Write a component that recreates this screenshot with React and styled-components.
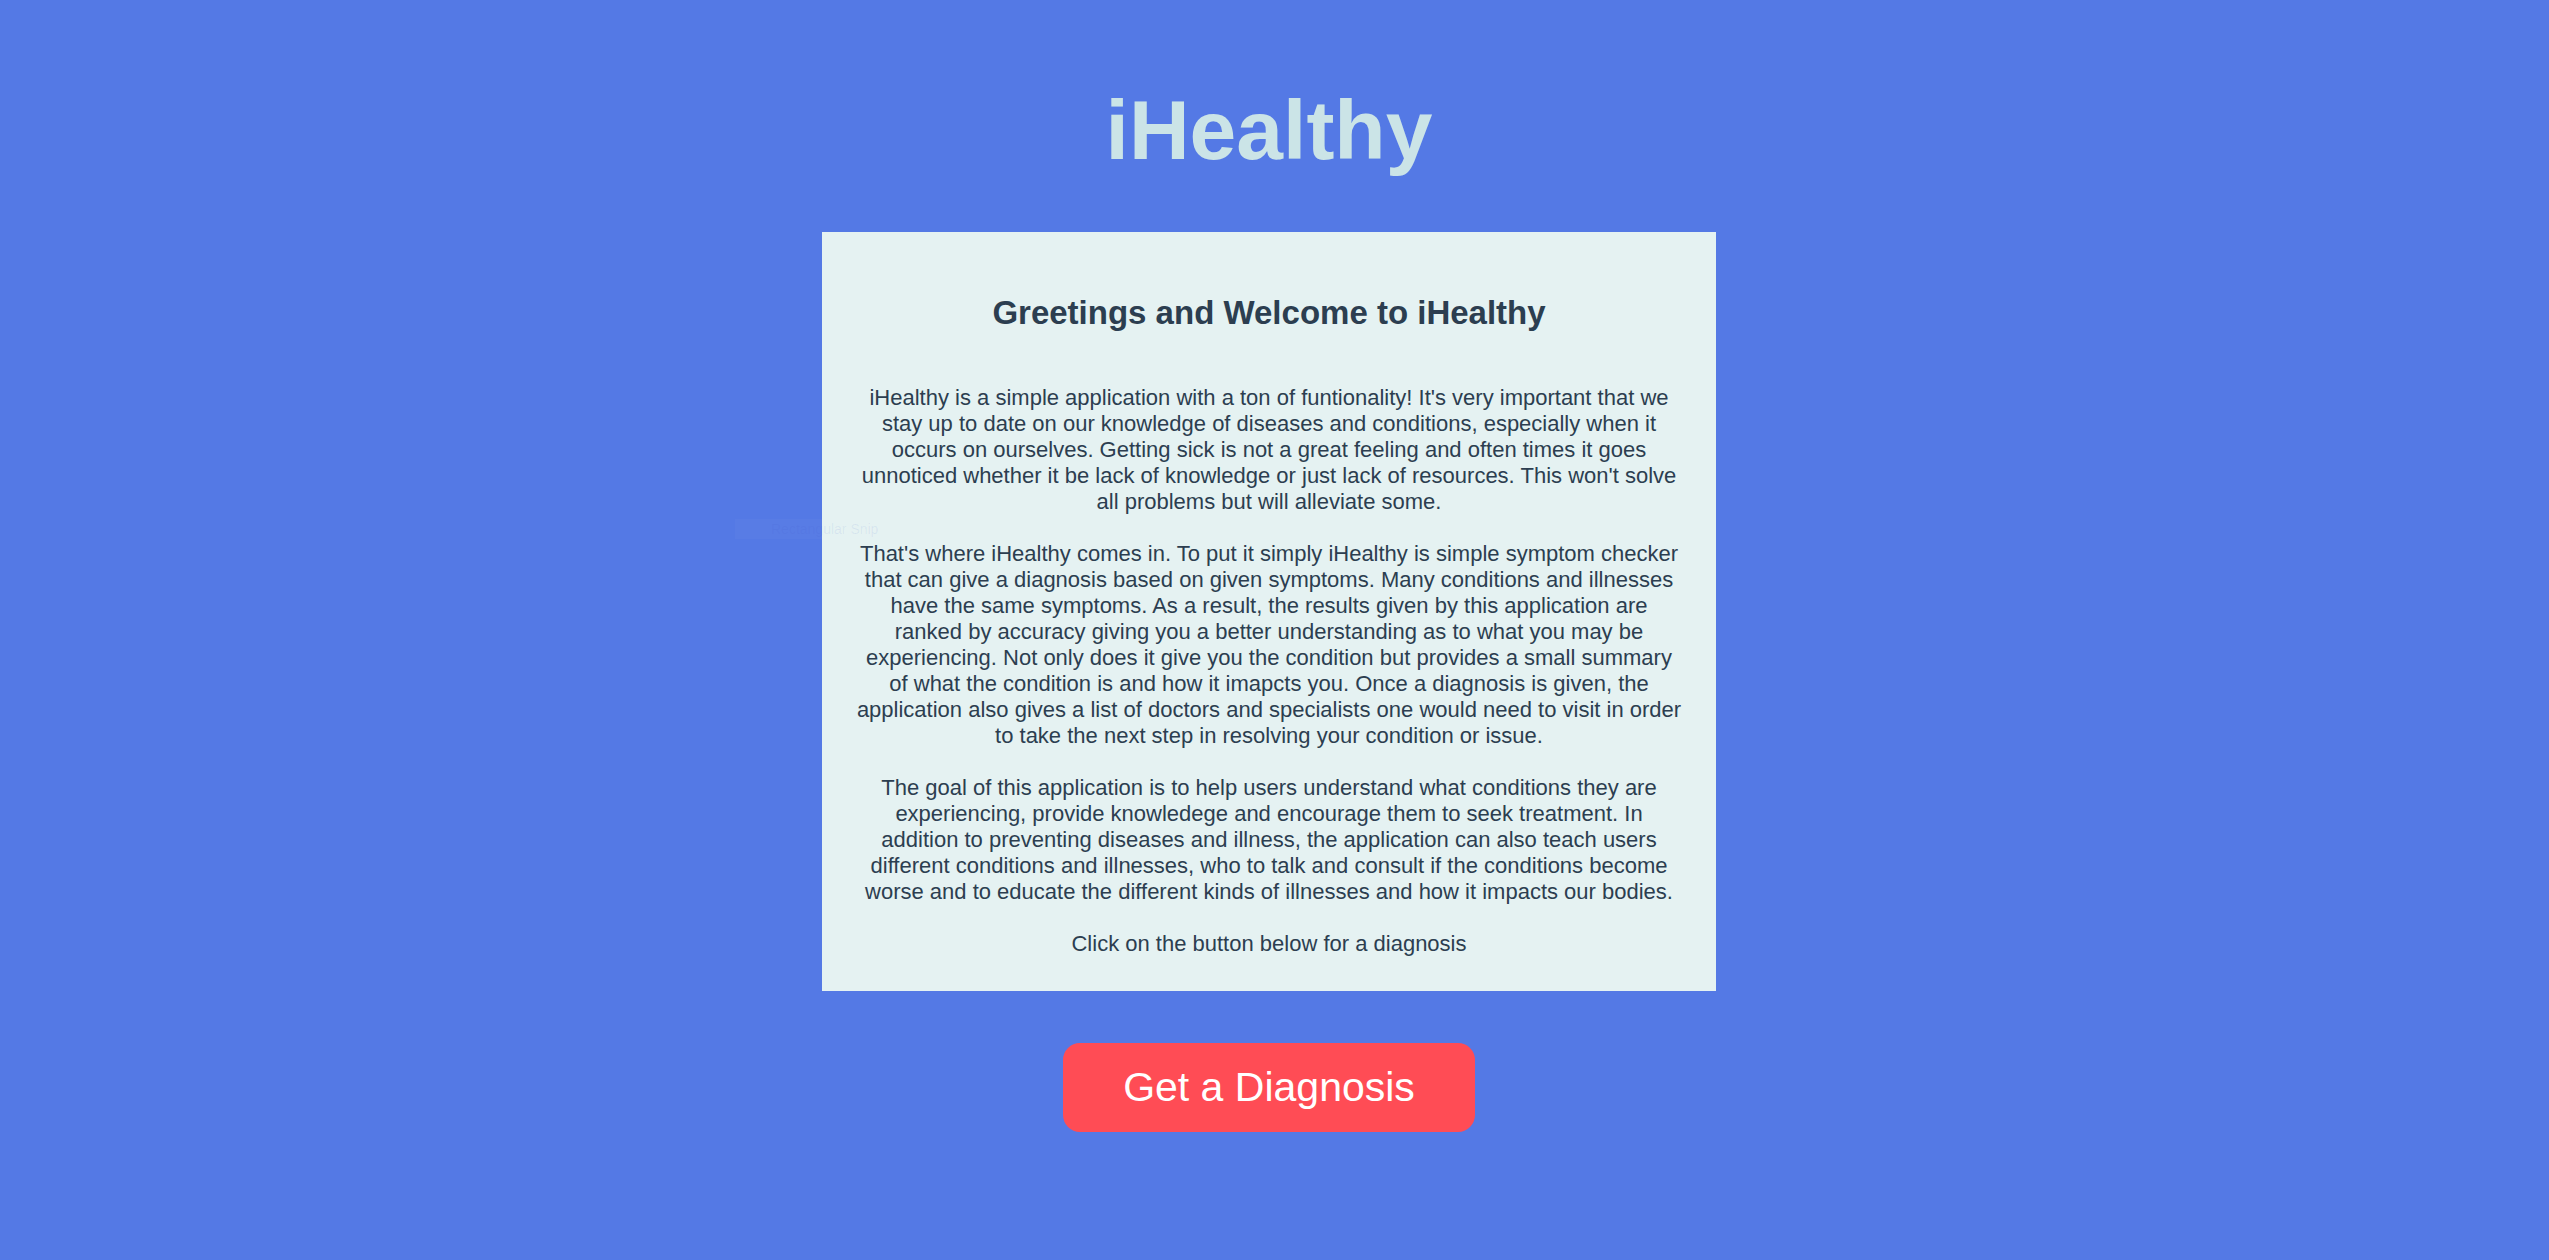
import styled, { createGlobalStyle } from "styled-components";

const GlobalStyle = createGlobalStyle`
  html, body {
    margin: 0;
    padding: 0;
  }
  body {
    background: #5479e5;
    font-family: "Liberation Sans", Arial, Helvetica, sans-serif;
  }
`;

const Page = styled.div`
  position: relative;
  min-height: 100vh;
  box-sizing: border-box;
  padding: 88px 11px 60px 0;
  display: flex;
  flex-direction: column;
  align-items: center;
  background: #5479e5;
  color: #2c3e50;
`;

const Title = styled.h1`
  margin: 0 0 60px;
  font-size: 84px;
  line-height: 1;
  font-weight: 700;
  color: #cbe4e7;
`;

const Card = styled.section`
  width: 894px;
  box-sizing: border-box;
  padding: 62px 32px 34px;
  background: #e5f2f2;
  display: flex;
  flex-direction: column;
  gap: 26px;
  text-align: center;
`;

const Heading = styled.h2`
  margin: 0 0 27px;
  font-size: 33px;
  line-height: 1.15;
  font-weight: 700;
  color: #2c3e50;
`;

const Para = styled.p`
  margin: 0;
  font-size: 22px;
  line-height: 26px;
  color: #2c3e50;
`;

const Button = styled.button`
  margin-top: 52px;
  width: 412px;
  height: 89px;
  border: none;
  border-radius: 17px;
  background: #ff4c55;
  color: #ffffff;
  font-family: "Liberation Sans", Arial, sans-serif;
  font-size: 41px;
  cursor: pointer;
`;

const Snip = styled.div`
  position: absolute;
  left: 735px;
  top: 519px;
  width: 205px;
  height: 20px;
  display: flex;
  align-items: center;
  padding-left: 36px;
  box-sizing: border-box;
  background: rgba(255, 255, 255, 0.025);
  color: rgba(60, 90, 200, 0.09);
  font-size: 14px;
  line-height: 16px;
  pointer-events: none;
`;

export default function App() {
  return (
    <>
      <GlobalStyle />
      <Page>
        <Title>iHealthy</Title>
        <Card>
          <Heading>Greetings and Welcome to iHealthy</Heading>
          <Para>
            iHealthy is a simple application with a ton of funtionality! It's very important that we
            stay up to date on our knowledge of diseases and conditions, especially when it occurs on
            ourselves. Getting sick is not a great feeling and often times it goes unnoticed whether it
            be lack of knowledge or just lack of resources. This won't solve all problems but will
            alleviate some.
          </Para>
          <Para>
            That's where iHealthy comes in. To put it simply iHealthy is simple symptom checker that can
            give a diagnosis based on given symptoms. Many conditions and illnesses have the same
            symptoms. As a result, the results given by this application are ranked by accuracy giving
            you a better understanding as to what you may be experiencing. Not only does it give you the
            condition but provides a small summary of what the condition is and how it imapcts you. Once
            a diagnosis is given, the application also gives a list of doctors and specialists one would
            need to visit in order to take the next step in resolving your condition or issue.
          </Para>
          <Para>
            The goal of this application is to help users understand what conditions they are
            experiencing, provide knowledege and encourage them to seek treatment. In addition to
            preventing diseases and illness, the application can also teach users different conditions
            and illnesses, who to talk and consult if the conditions become worse and to educate the
            different kinds of illnesses and how it impacts our bodies.
          </Para>
          <Para>Click on the button below for a diagnosis</Para>
        </Card>
        <Button>Get a Diagnosis</Button>
        <Snip>Rectangular Snip</Snip>
      </Page>
    </>
  );
}
